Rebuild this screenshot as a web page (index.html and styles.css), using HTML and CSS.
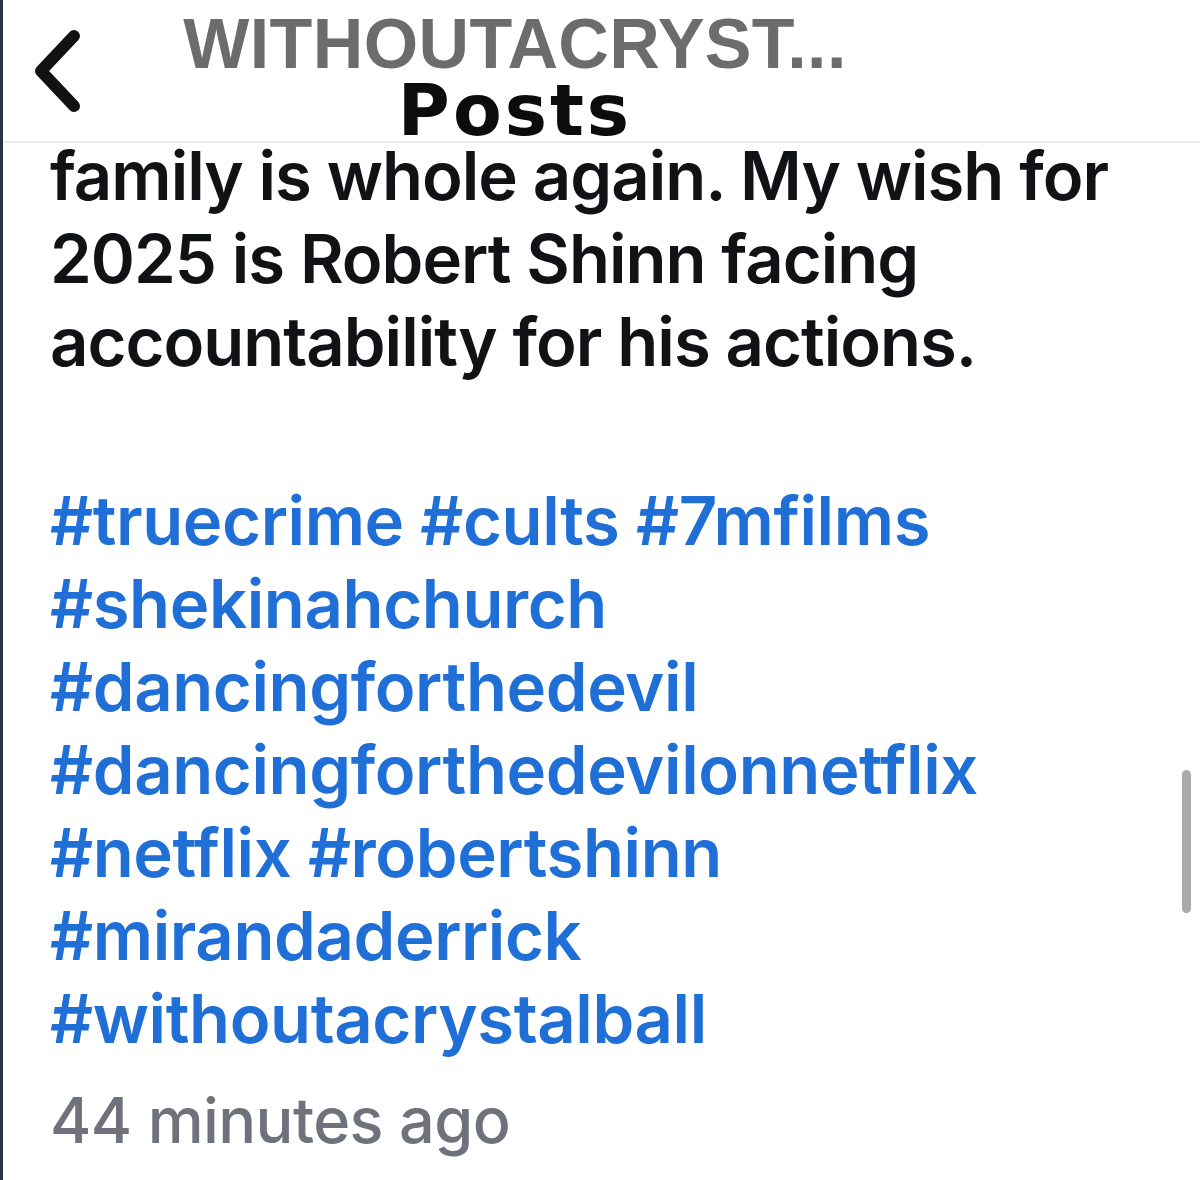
FILE: index.html
```html
<!DOCTYPE html>
<html lang="en">
<head>
<meta charset="utf-8">
<title>WITHOUTACRYSTALBALL Posts</title>
<link rel="stylesheet" href="styles.css">
</head>
<body>
<div class="screen">
  <header class="topbar">
    <button class="back" aria-label="Back">
      <svg width="56" height="84" viewBox="0 0 56 84" aria-hidden="true">
        <path d="M41 8 L8 43 L41 78" fill="none" stroke="#111214" stroke-width="12" stroke-linecap="round" stroke-linejoin="round"/>
      </svg>
    </button>
    <div class="titles">
      <div class="account">WITHOUTACRYST...</div>
      <div class="section">Posts</div>
    </div>
  </header>
  <main class="post">
    <p class="caption">family is whole again. My wish for<br>2025 is Robert Shinn facing<br>accountability for his actions.</p>
    <p class="tags"><a href="#">#truecrime</a> <a href="#">#cults</a> <a href="#">#7mfilms</a><br><a href="#">#shekinahchurch</a><br><a href="#">#dancingforthedevil</a><br><a href="#">#dancingforthedevilonnetflix</a><br><a href="#">#netflix</a> <a href="#">#robertshinn</a><br><a href="#">#mirandaderrick</a><br><a href="#">#withoutacrystalball</a></p>
    <div class="time">44 minutes ago</div>
  </main>
  <div class="scrollbar"></div>
</div>
</body>
</html>
```
FILE: styles.css
```css
html, body {
  margin: 0;
  padding: 0;
  background: #ffffff;
}

.screen {
  position: relative;
  width: 1197px;
  height: 1180px;
  border-left: 3px solid #2b3440;
  background: #ffffff;
  overflow: hidden;
}

.topbar {
  position: relative;
  z-index: 2;
  display: flex;
  align-items: flex-start;
  height: 143px;
  padding: 9px 0 0 30px;
  box-sizing: border-box;
  border-bottom: 2px solid #ececec;
  background: #ffffff;
}

.back {
  flex: none;
  width: 60px;
  height: 84px;
  margin-top: 19px;
  padding: 0;
  border: 0;
  background: transparent;
  display: flex;
  align-items: center;
  justify-content: flex-start;
}

.titles {
  flex: none;
  width: 800px;
  margin-left: 22px;
  text-align: center;
}

.account {
  font-family: "Liberation Sans", Arial, sans-serif;
  font-weight: 700;
  font-size: 70px;
  line-height: 70px;
  letter-spacing: 0.4px;
  color: #6c6c6c;
  white-space: nowrap;
}

.section {
  font-family: "DejaVu Sans", sans-serif;
  font-weight: 700;
  font-size: 71px;
  line-height: 64px;
  letter-spacing: 3px;
  color: #0c0c0c;
}

.post {
  padding: 0 0 0 47px;
  font-family: Inter, "Liberation Sans", sans-serif;
  font-weight: 600;
  font-size: 67px;
  line-height: 83px;
  letter-spacing: -1px;
}

.caption {
  margin: -9px 0 0 0;
  color: #111215;
  white-space: nowrap;
}

.tags {
  margin: 96px 0 0 0;
  white-space: nowrap;
  letter-spacing: -0.4px;
}

.tags a {
  color: #1f6fd6;
  text-decoration: none;
}

.time {
  margin-top: 19px;
  font-size: 63px;
  font-weight: 500;
  letter-spacing: -0.6px;
  color: #6f727a;
  white-space: nowrap;
}

.scrollbar {
  position: absolute;
  left: 1179px;
  top: 770px;
  width: 9px;
  height: 143px;
  border-radius: 5px;
  background: #a9a9a9;
}
```
